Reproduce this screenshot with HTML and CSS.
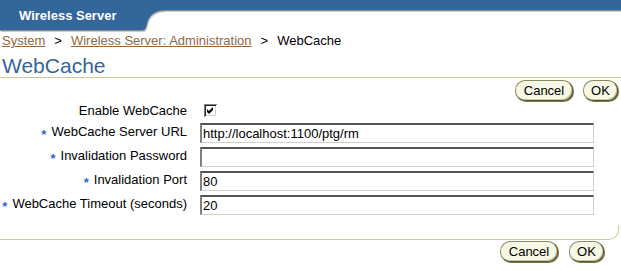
FILE: index.html
```html
<!DOCTYPE html>
<html>
<head>
<meta charset="utf-8">
<link rel="stylesheet" href="styles.css">
</head>
<body>
<div class="header">
  <svg class="header-shape" width="621" height="33" viewBox="0 0 621 33">
    <path d="M0 0 H621 V10 H166 C157 10 151 13 148 20 L146 27 C145 30 143 30 141 30 H0 Z" fill="#c8c8c8" transform="translate(1,2)"/>
    <path d="M0 0 H621 V10 H166 C157 10 151 13 148 20 L146 27 C145 30 143 30 141 30 H0 Z" fill="#8c8c8c" transform="translate(0,1)"/>
    <path d="M0 0 H621 V10 H166 C157 10 151 13 148 20 L146 27 C145 30 143 30 141 30 H0 Z" fill="#336699"/>
  </svg>
  <span class="brand">Wireless Server</span>
</div>
<div class="crumbs">
  <a href="#" class="crumb-link">System</a><span class="sep">&gt;</span><a href="#" class="crumb-link">Wireless Server: Administration</a><span class="sep">&gt;</span><span>WebCache</span>
</div>
<h1 class="title">WebCache</h1>
<div class="actions actions-top">
  <button class="btn btn-cancel">Cancel</button>
  <button class="btn btn-ok">OK</button>
</div>
<div class="form">
  <label class="label">Enable WebCache</label>
  <div class="control">
    <svg class="checkbox" width="13" height="13" viewBox="0 0 13 13">
      <rect x="0" y="0" width="13" height="13" fill="#808080"/>
      <rect x="1" y="1" width="12" height="12" fill="#ffffff"/>
      <rect x="1" y="1" width="11" height="11" fill="#202020"/>
      <rect x="2" y="2" width="10" height="10" fill="#d4d0c8"/>
      <rect x="2" y="2" width="9" height="9" fill="#ffffff"/>
      <path d="M3 5 L5 7 L9 3 L9 6 L5 10 L3 8 Z" fill="#000"/>
    </svg>
  </div>
  <label class="label"><span class="req">*</span>WebCache Server URL</label>
  <div class="control"><input class="field" type="text" value="http://localhost:1100/ptg/rm"></div>
  <label class="label"><span class="req">*</span>Invalidation Password</label>
  <div class="control"><input class="field" type="password" value=""></div>
  <label class="label"><span class="req">*</span>Invalidation Port</label>
  <div class="control"><input class="field" type="text" value="80"></div>
  <label class="label"><span class="req">*</span>WebCache Timeout (seconds)</label>
  <div class="control"><input class="field" type="text" value="20"></div>
</div>
<div class="footer-rule"></div>
<div class="actions actions-bottom">
  <button class="btn btn-cancel">Cancel</button>
  <button class="btn btn-ok">OK</button>
</div>
</body>
</html>
```
FILE: styles.css
```css
html, body {
  margin: 0;
  padding: 0;
  background: #ffffff;
  width: 621px;
  height: 271px;
  overflow: hidden;
}
body {
  font-family: "Liberation Sans", Arial, sans-serif;
  font-size: 13px;
  color: #000;
}
.header {
  position: relative;
  height: 33px;
}
.header-shape {
  position: absolute;
  top: 0;
  left: 0;
  display: block;
}
.brand {
  position: relative;
  display: block;
  padding: 8px 0 0 19px;
  font-weight: bold;
  font-size: 13px;
  line-height: 15px;
  color: #ffffff;
}
.crumbs {
  padding: 0 0 0 2px;
  margin-top: 0;
  line-height: 16px;
  height: 20px;
}
.crumb-link {
  color: #996633;
  text-decoration: underline;
}
.sep {
  margin: 0 9px;
}
.title {
  margin: 2px 0 0 0;
  padding: 0 0 0 2px;
  font-size: 21px;
  font-weight: normal;
  line-height: 22px;
  color: #336699;
  border-bottom: 1px solid #cccc99;
}
.actions {
  display: flex;
  justify-content: flex-end;
  gap: 10px;
}
.actions-top {
  margin-top: 2px;
  padding-right: 3px;
}
.actions-bottom {
  margin-top: 1px;
  padding-right: 17px;
  gap: 11px;
}
.btn {
  box-sizing: border-box;
  height: 21px;
  padding: 0;
  font-family: "Liberation Sans", Arial, sans-serif;
  font-size: 13px;
  line-height: 17px;
  color: #000;
  background: #f7f7e5;
  border: 1px solid #8a8a60;
  border-right-color: #55552e;
  border-bottom-color: #55552e;
  border-radius: 10px;
  box-shadow: 1px 1px 0 #77774a, inset -1px -1px 0 #c9c9a8;
}
.btn-cancel {
  width: 58px;
}
.btn-ok {
  width: 35px;
}
.form {
  display: grid;
  grid-template-columns: 187px 394px;
  grid-template-rows: 17px repeat(4, 20px);
  column-gap: 13px;
  row-gap: 4px;
  margin-top: 1px;
  align-items: center;
}
.label {
  text-align: right;
  white-space: nowrap;
  line-height: 16px;
}
.req {
  color: #3366cc;
  font-weight: bold;
  font-size: 13px;
  vertical-align: -3px;
  margin-right: 5px;
}
.control {
  display: flex;
  align-items: center;
  height: 100%;
}
.checkbox {
  display: block;
  margin-left: 4px;
}
.field {
  box-sizing: border-box;
  width: 394px;
  height: 20px;
  margin: 0;
  padding: 0 1px;
  font-family: "Liberation Sans", Arial, sans-serif;
  font-size: 13px;
  color: #000;
  background: #fff;
  border-style: solid;
  border-width: 2px 1px 1px 2px;
  border-color: #555555 #d4d0c8 #d4d0c8 #808080;
  outline: none;
}
.footer-rule {
  box-sizing: border-box;
  margin-top: 10px;
  margin-right: 2px;
  height: 15px;
  border-bottom: 1px solid #cccc99;
  border-right: 1px solid #cccc99;
  border-bottom-right-radius: 10px;
}
```
